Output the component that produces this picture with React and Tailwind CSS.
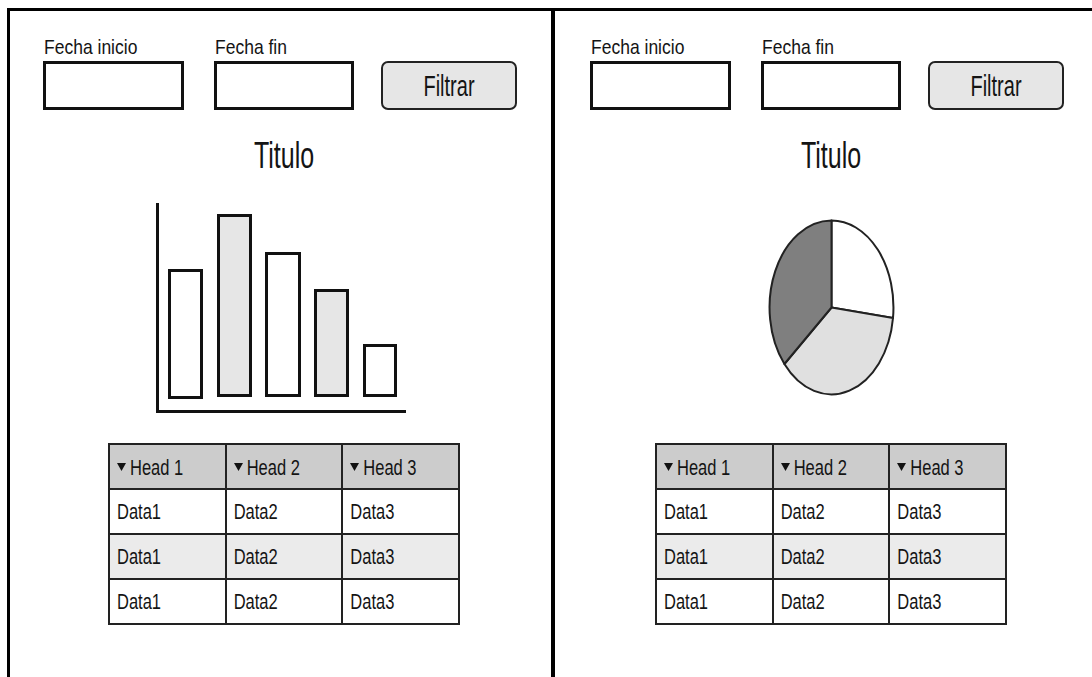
import React from "react";

const ink = "text-[#141414]";

function Caret() {
  return (
    <svg width="9" height="8" viewBox="0 0 9 8" className="inline-block mr-[4px] align-middle">
      <path d="M0 0 H9 L4.5 8 Z" fill="#111" />
    </svg>
  );
}

function Filters() {
  return (
    <div className="flex items-end pl-[33px]">
      <div className="flex flex-col w-[141px]">
        <span className={`h-[20px] pl-[1px] text-[17.5px] leading-[20px] ${ink}`}>
          <span className="inline-block scale-y-[1.15]">Fecha inicio</span>
        </span>
        <div className="mt-[4px] h-[49px] border-[3px] border-[#111] bg-white" />
      </div>
      <div className="ml-[30px] flex flex-col w-[140px]">
        <span className={`h-[20px] pl-[1px] text-[17.5px] leading-[20px] ${ink}`}>
          <span className="inline-block scale-y-[1.15]">Fecha fin</span>
        </span>
        <div className="mt-[4px] h-[49px] border-[3px] border-[#111] bg-white" />
      </div>
      <button className={`ml-[27px] flex h-[49px] w-[136px] items-center justify-center rounded-[7px] border-2 border-[#222] bg-[#e6e6e6] text-[20px] ${ink}`}>
        <span className="inline-block scale-y-[1.45]">Filtrar</span>
      </button>
    </div>
  );
}

function Title() {
  return (
    <div className={`mt-[30px] w-[548px] text-center text-[25px] leading-[30px] ${ink}`}>
      <span className="inline-block scale-y-[1.45]">Titulo</span>
    </div>
  );
}

function BarChart() {
  return (
    <svg width="260" height="216" viewBox="0 0 260 216" className="mt-[30px] ml-[140px] block">
      <line x1="7.5" y1="3" x2="7.5" y2="212.5" stroke="#111" strokeWidth="3" />
      <line x1="6" y1="211.5" x2="256" y2="211.5" stroke="#111" strokeWidth="3" />
      <rect x="19.5" y="70.5" width="32" height="127" fill="#fff" stroke="#111" strokeWidth="3" />
      <rect x="68.5" y="15.5" width="32" height="180" fill="#e6e6e6" stroke="#111" strokeWidth="3" />
      <rect x="116.5" y="53.5" width="33" height="142" fill="#fff" stroke="#111" strokeWidth="3" />
      <rect x="165.5" y="90.5" width="32" height="105" fill="#e6e6e6" stroke="#111" strokeWidth="3" />
      <rect x="214.5" y="145.5" width="31" height="50" fill="#fff" stroke="#111" strokeWidth="3" />
    </svg>
  );
}

function PieChart() {
  return (
    <svg width="260" height="216" viewBox="0 0 260 216" className="mt-[30px] ml-[138px] block">
      <path d="M136.5 107.5 L136.5 20.5 A62 87 0 0 1 198 118 Z" fill="#fff" stroke="#222" strokeWidth="2" strokeLinejoin="round" />
      <path d="M136.5 107.5 L198 118 A62 87 0 0 1 89.4 164 Z" fill="#e0e0e0" stroke="#222" strokeWidth="2" strokeLinejoin="round" />
      <path d="M136.5 107.5 L89.4 164 A62 87 0 0 1 136.5 20.5 Z" fill="#7f7f7f" stroke="#222" strokeWidth="2" strokeLinejoin="round" />
    </svg>
  );
}

function DataTable() {
  const rows = [
    ["Data1", "Data2", "Data3"],
    ["Data1", "Data2", "Data3"],
    ["Data1", "Data2", "Data3"],
  ];
  return (
    <table className={`mt-[27px] ml-[98px] w-[352px] table-fixed border-collapse text-[16.5px] ${ink}`}>
      <thead>
        <tr className="bg-[#cccccc]">
          {["Head 1", "Head 2", "Head 3"].map((h) => (
            <th key={h} className="h-[45px] border-2 border-[#222] pl-[7px] text-left font-normal">
              <Caret />
              <span className="inline-block scale-y-[1.35] align-middle">{h}</span>
            </th>
          ))}
        </tr>
      </thead>
      <tbody>
        {rows.map((r, i) => (
          <tr key={i} className={i === 1 ? "bg-[#ebebeb]" : "bg-white"}>
            {r.map((c, j) => (
              <td key={j} className="h-[45px] border-2 border-[#222] pl-[7px]">
                <span className="inline-block scale-y-[1.35]">{c}</span>
              </td>
            ))}
          </tr>
        ))}
      </tbody>
    </table>
  );
}

function Panel({ chart, className }) {
  return (
    <div className={`flex flex-col pt-[26px] ${className}`}>
      <Filters />
      <Title />
      {chart}
      <DataTable />
    </div>
  );
}

export default function App() {
  return (
    <div className="h-screen w-full overflow-hidden bg-white pt-[8px] pl-[7px] font-['Liberation_Sans',Arial,sans-serif]">
      <div className="flex h-full border-t-[3px] border-l-[3px] border-black">
        <Panel chart={<BarChart />} className="w-[545px] shrink-0 border-r-4 border-black" />
        <Panel chart={<PieChart />} className="flex-1 pl-[2px]" />
      </div>
    </div>
  );
}
